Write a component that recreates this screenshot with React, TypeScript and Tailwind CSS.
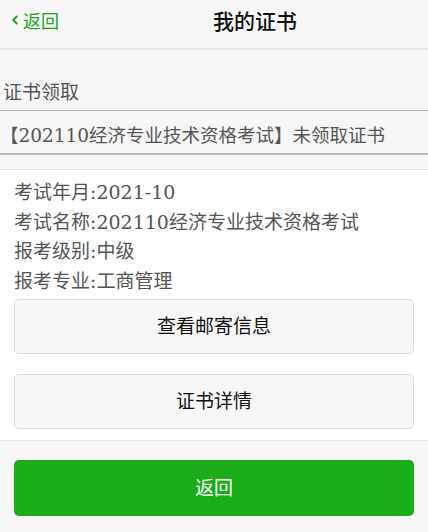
import { ChevronLeft } from 'lucide-react';

const info = [
  '考试年月:2021-10',
  '考试名称:202110经济专业技术资格考试',
  '报考级别:中级',
  '报考专业:工商管理',
];

export default function App() {
  return (
    <div className="flex h-[532px] w-[428px] flex-col overflow-hidden bg-[#f6f6f6] font-[family-name:'DejaVu_Serif','Noto_Sans_CJK_SC',serif]">
      <header className="flex h-[48px] shrink-0 items-start bg-[#f7f7f7] pt-[8px] shadow-[0_1px_2px_rgba(0,0,0,0.12)]">
        <div className="flex w-[82px] items-center pl-[8px] font-[family-name:'Noto_Sans_CJK_SC',sans-serif] text-[18px] leading-[24px] text-[#22a122]">
          <ChevronLeft className="h-[16px] w-[14px]" strokeWidth={3.5} />
          <span className="ml-[1px]">返回</span>
        </div>
        <h1 className="flex-1 text-center font-[family-name:'Noto_Sans_CJK_SC',sans-serif] text-[21px] leading-[24px] font-medium text-[#111]">
          我的证书
        </h1>
      </header>

      <div className="mt-[30px] border-b border-[#b4b4b4] pb-[4px] pl-[3px] text-[19px] leading-[28px] text-[#555]">
        证书领取
      </div>
      <div className="border-b-2 border-[#b8b8b8] pt-[12px] pb-[4px] text-[18.5px] leading-[26px] text-[#555]">
        【202110经济专业技术资格考试】未领取证书
      </div>

      <section className="mt-[14px] border-y border-[#e6e6e6] bg-white px-[14px] pt-[8px] pb-[11px]">
        <div className="text-[19px] leading-[29.7px] text-[#555]">
          {info.map((line) => (
            <p key={line}>{line}</p>
          ))}
        </div>
        <button className="mt-[2px] flex h-[55px] w-full items-center justify-center rounded-[5px] border border-[#dcdcdc] bg-[#f7f7f7] text-[19px] text-[#111]">
          查看邮寄信息
        </button>
        <button className="mt-[20px] flex h-[55px] w-full items-center justify-center rounded-[5px] border border-[#dcdcdc] bg-[#f7f7f7] text-[19px] text-[#111]">
          证书详情
        </button>
      </section>

      <div className="px-[14px] pt-[19px]">
        <button className="flex h-[56px] w-full items-center justify-center rounded-[5px] bg-[#1aad19] text-[19px] text-white">
          返回
        </button>
      </div>
    </div>
  );
}
